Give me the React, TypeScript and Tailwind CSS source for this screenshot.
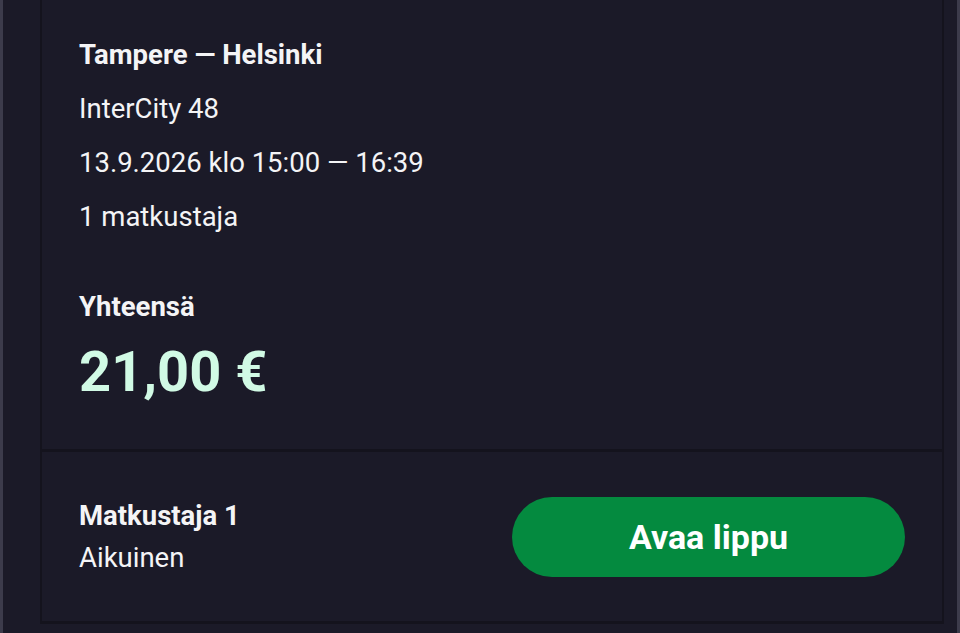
import React from "react";

export default function App() {
  return (
    <div
      className="w-[960px] h-[633px] overflow-hidden flex bg-[#1b1a28] text-[#f4f4f6]"
      style={{ fontFamily: "Roboto, 'Noto Sans', sans-serif" }}
    >
      <div className="w-[3px] shrink-0 bg-[#3c3b4b]" />
      <div className="flex-1 pl-[37px] pr-[13px]">
        <div className="border-x-2 border-b-[3px] border-[#14131d] bg-[#1b1a28]">
          <section className="px-[37px] pt-[28px] pb-[45px] border-b-[3px] border-[#14131d]">
            <div className="text-[27.5px] leading-[54px] font-bold">Tampere — Helsinki</div>
            <div className="text-[27.5px] leading-[54px]">InterCity 48</div>
            <div className="text-[27.5px] leading-[54px]">13.9.2026 klo 15:00 — 16:39</div>
            <div className="text-[27.5px] leading-[54px]">1 matkustaja</div>
            <div className="mt-[36px] text-[27.5px] leading-[54px] font-bold">Yhteensä</div>
            <div className="mt-[10px] h-[60px] text-[56px] leading-[56px] font-bold text-[#d1fae5] whitespace-nowrap">
              21,00 €
            </div>
          </section>
          <section className="px-[37px] pt-[43px] pb-[42px] flex items-center justify-between">
            <div>
              <div className="text-[27.5px] leading-[42px] font-bold">Matkustaja 1</div>
              <div className="text-[27.5px] leading-[42px]">Aikuinen</div>
            </div>
            <button className="w-[393px] h-[80px] rounded-full bg-[#048a3f] text-white text-[34px] font-bold">
              Avaa lippu
            </button>
          </section>
        </div>
      </div>
      <div className="w-[3px] shrink-0 bg-[#3c3b4b]" />
    </div>
  );
}
